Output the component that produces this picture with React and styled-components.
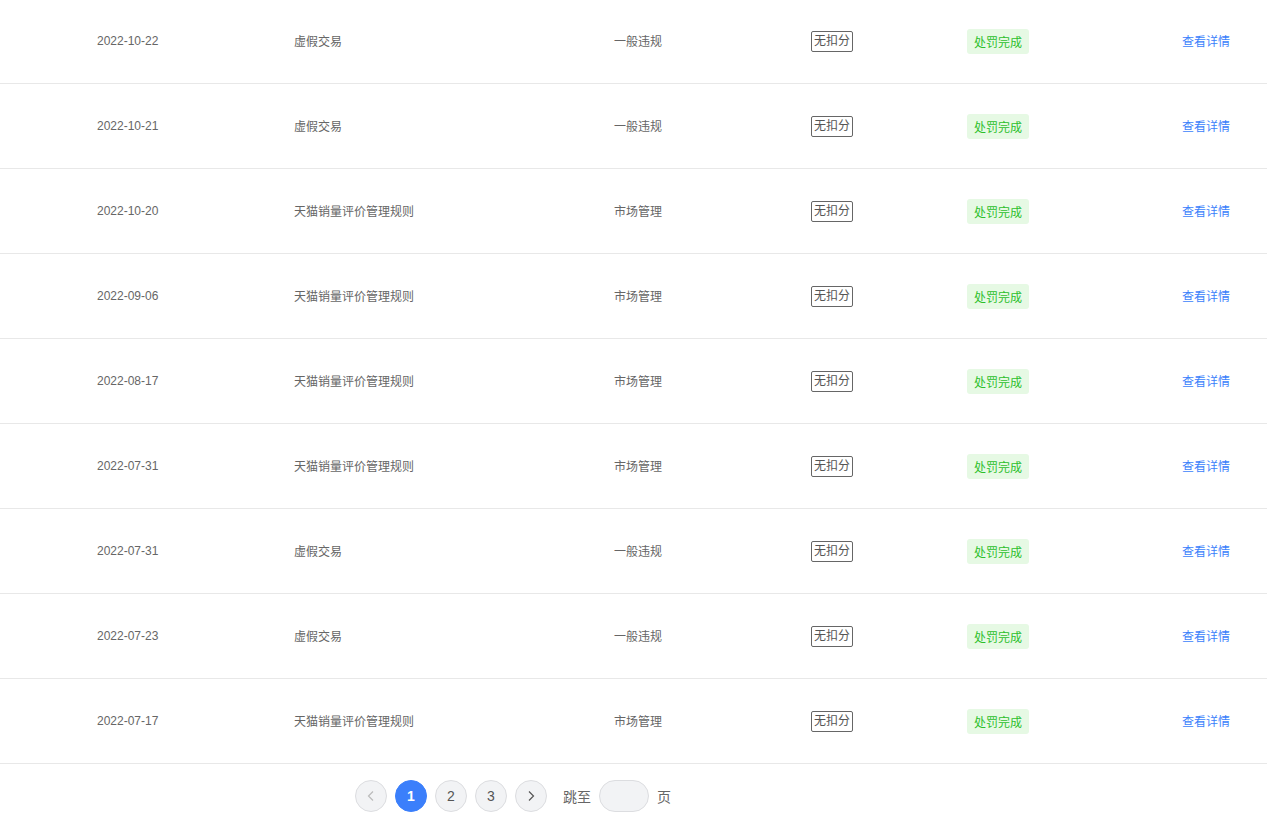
import React from "react";
import styled, { createGlobalStyle } from "styled-components";

const Global = createGlobalStyle`
  body {
    margin: 0;
    background: #fff;
    font-family: "Liberation Sans", "Noto Sans CJK SC", sans-serif;
    overflow: hidden;
  }
`;

const Table = styled.div`
  margin-top: -1px;
`;

const Row = styled.div`
  display: grid;
  grid-template-columns: 197px 320px 197px 156px 62px 1fr;
  align-items: center;
  box-sizing: border-box;
  height: 85px;
  padding: 0 37px 2px 97px;
  border-bottom: 1px solid #e8e8e8;
  font-size: 12px;
  color: #666;
`;

const Cell = styled.div`
  white-space: nowrap;
  margin-top: ${(p) => (p.nudge ? "2px" : "0")};
`;

const Tag = styled.span`
  display: inline-block;
  box-sizing: border-box;
  height: 21px;
  line-height: 19px;
  padding: 0 2px;
  border: 1px solid #666;
  border-radius: 2px;
  color: #555;
  font-size: 12px;
`;

const Badge = styled.span`
  display: inline-flex;
  align-items: center;
  justify-content: center;
  width: 62px;
  height: 25px;
  border-radius: 3px;
  background: #e6f9e4;
  color: #2cbf2c;
  font-size: 12px;
`;

const Link = styled.a`
  justify-self: end;
  color: #3b7ffb;
  font-size: 12px;
  cursor: pointer;
`;

const Pager = styled.div`
  display: flex;
  align-items: center;
  gap: 8px;
  padding: 16px 0 0 355px;
  font-size: 14px;
  color: #666;
`;

const PageBtn = styled.button`
  box-sizing: border-box;
  width: 32px;
  height: 32px;
  border-radius: 50%;
  border: 1px solid ${(p) => (p.active ? "#3b7ffb" : "#dcdde0")};
  background: ${(p) => (p.active ? "#3b7ffb" : "#f2f3f5")};
  color: ${(p) => (p.active ? "#fff" : p.disabled ? "#bbb" : "#555")};
  font-family: "Liberation Sans", sans-serif;
  font-size: 14px;
  font-weight: ${(p) => (p.active ? 700 : 400)};
  display: flex;
  align-items: center;
  justify-content: center;
  padding: 0;
`;

const JumpLabel = styled.span`
  margin-left: 8px;
  font-size: 14px;
  color: #666;
`;

const JumpInput = styled.input`
  box-sizing: border-box;
  width: 50px;
  height: 32px;
  border-radius: 16px;
  border: 1px solid #dcdde0;
  background: #f2f3f5;
  outline: none;
`;

const rows = [
  ["2022-10-22", "虚假交易", "一般违规"],
  ["2022-10-21", "虚假交易", "一般违规"],
  ["2022-10-20", "天猫销量评价管理规则", "市场管理"],
  ["2022-09-06", "天猫销量评价管理规则", "市场管理"],
  ["2022-08-17", "天猫销量评价管理规则", "市场管理"],
  ["2022-07-31", "天猫销量评价管理规则", "市场管理"],
  ["2022-07-31", "虚假交易", "一般违规"],
  ["2022-07-23", "虚假交易", "一般违规"],
  ["2022-07-17", "天猫销量评价管理规则", "市场管理"],
];

const Chevron = ({ dir }) => (
  <svg width="14" height="14" viewBox="0 0 14 14" fill="none">
    <path
      d={dir === "left" ? "M9 2.5 4.5 7 9 11.5" : "M5 2.5 9.5 7 5 11.5"}
      stroke="currentColor"
      strokeWidth="1.2"
    />
  </svg>
);

export default function App() {
  return (
    <>
      <Global />
      <Table>
        {rows.map((r, i) => (
          <Row key={i}>
            <Cell nudge>{r[0]}</Cell>
            <Cell>{r[1]}</Cell>
            <Cell>{r[2]}</Cell>
            <Cell nudge>
              <Tag>无扣分</Tag>
            </Cell>
            <Cell nudge>
              <Badge>处罚完成</Badge>
            </Cell>
            <Link>查看详情</Link>
          </Row>
        ))}
      </Table>
      <Pager>
        <PageBtn disabled>
          <Chevron dir="left" />
        </PageBtn>
        <PageBtn active>1</PageBtn>
        <PageBtn>2</PageBtn>
        <PageBtn>3</PageBtn>
        <PageBtn>
          <Chevron dir="right" />
        </PageBtn>
        <JumpLabel>跳至</JumpLabel>
        <JumpInput />
        <span>页</span>
      </Pager>
    </>
  );
}
